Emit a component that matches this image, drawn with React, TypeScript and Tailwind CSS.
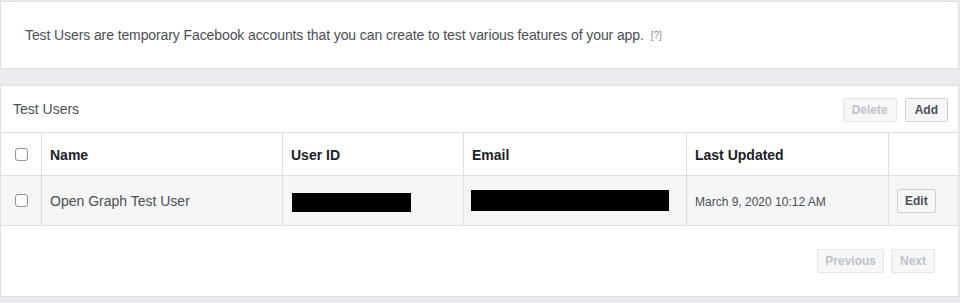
import React from 'react';

const Checkbox = () => (
  <span className="block w-[13px] h-[13px] rounded-[3px] border border-[#8d949e] bg-white" />
);

const cols = 'grid grid-cols-[41px_241px_181px_223px_202px_1fr]';

export default function App() {
  return (
    <div className="w-[960px] h-[303px] bg-[#e9ebee] pt-[1px] pr-[1px] font-['Liberation_Sans',Arial,sans-serif] text-[#1d2129]">
      <div className="h-[68px] bg-white border border-[#dddfe2] flex items-center pl-[24px]">
        <p className="text-[14px] text-[#4b4f56] tracking-[-0.1px]">
          Test Users are temporary Facebook accounts that you can create to test various features of your app.
          <span className="ml-[7px] text-[10px] text-[#90949c] align-[1px]">[?]</span>
        </p>
      </div>

      <div className="mt-[16px] h-[212px] bg-white border border-[#dddfe2] flex flex-col">
        <div className="h-[47px] flex items-center justify-between pl-[12px] pr-[10px] border-b border-[#dddfe2]">
          <h3 className="text-[14px] text-[#4b4f56]">Test Users</h3>
          <div className="flex gap-[8px] pt-[2px]">
            <button className="h-[24px] px-[8px] rounded-[2px] border border-[#e5e6e9] bg-[#f6f7f9] text-[12px] font-bold text-[#bec3c9]">Delete</button>
            <button className="h-[24px] px-[9px] rounded-[2px] border border-[#ccd0d5] bg-[#f6f7f9] text-[12px] font-bold text-[#4b4f56]">Add</button>
          </div>
        </div>

        <div className={`${cols} h-[43px] border-b border-[#dddfe2] text-[14px] font-bold text-[#1d2129]`}>
          <div className="flex items-center justify-center pl-[1px] border-r border-[#dddfe2]"><Checkbox /></div>
          <div className="flex items-center pl-[8px] pt-[2px] border-r border-[#dddfe2]">Name</div>
          <div className="flex items-center pl-[8px] pt-[2px] border-r border-[#dddfe2]">User ID</div>
          <div className="flex items-center pl-[8px] pt-[2px] border-r border-[#dddfe2]">Email</div>
          <div className="flex items-center pl-[8px] pt-[2px] border-r border-[#dddfe2]">Last Updated</div>
          <div />
        </div>

        <div className={`${cols} h-[50px] bg-[#f5f6f7] border-b border-[#dddfe2] text-[14px] text-[#4b4f56]`}>
          <div className="flex items-center justify-center pl-[1px] border-r border-[#dddfe2]"><Checkbox /></div>
          <div className="flex items-center pl-[8px] pt-[2px] border-r border-[#dddfe2]">Open Graph Test User</div>
          <div className="flex items-center pl-[9px] border-r border-[#dddfe2]">
            <span className="block w-[119px] h-[19px] bg-black mt-[3px]" />
          </div>
          <div className="flex items-center pl-[7px] border-r border-[#dddfe2]">
            <span className="block w-[198px] h-[21px] bg-black" />
          </div>
          <div className="flex items-center pl-[8px] pt-[2px] border-r border-[#dddfe2] text-[12px]">March 9, 2020 10:12 AM</div>
          <div className="flex items-center pl-[8px]">
            <button className="h-[24px] px-[7px] rounded-[2px] border border-[#ccd0d5] bg-[#f6f7f9] text-[12px] font-bold text-[#4b4f56]">Edit</button>
          </div>
        </div>

        <div className="flex-1 flex items-center justify-end gap-[7px] pr-[23px]">
          <button className="h-[24px] px-[7px] rounded-[2px] border border-[#e5e6e9] bg-[#f6f7f9] text-[12px] font-bold text-[#bec3c9]">Previous</button>
          <button className="h-[24px] px-[8px] rounded-[2px] border border-[#e5e6e9] bg-[#f6f7f9] text-[12px] font-bold text-[#bec3c9]">Next</button>
        </div>
      </div>
    </div>
  );
}
